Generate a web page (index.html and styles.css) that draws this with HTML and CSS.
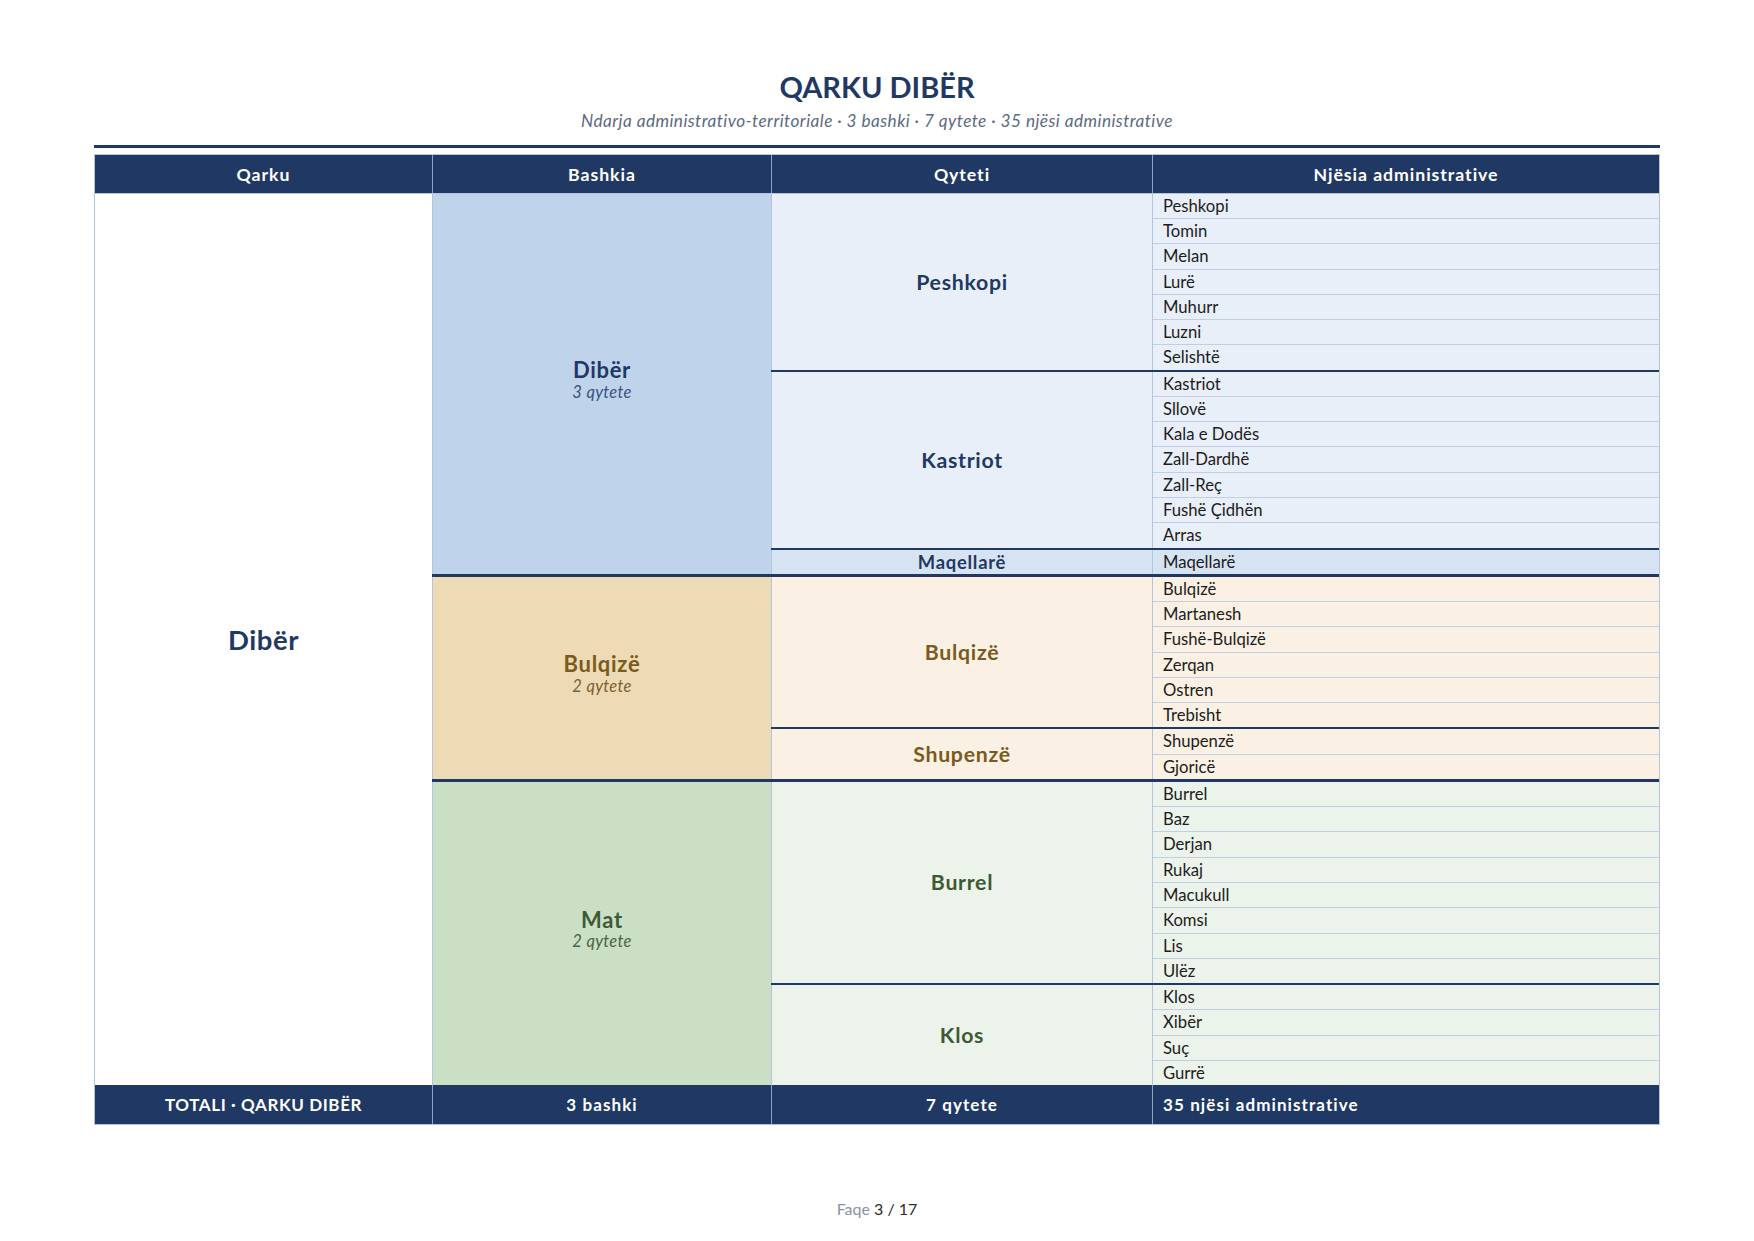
FILE: index.html
```html
<!DOCTYPE html>
<html lang="sq">
<head>
<meta charset="utf-8">
<title>Qarku Dibër</title>
<link rel="stylesheet" href="styles.css">
</head>
<body>
<div class="page">
  <header class="doc-head">
    <h1 class="title">QARKU DIBËR</h1>
    <p class="subtitle">Ndarja administrativo-territoriale · 3 bashki · 7 qytete · 35 njësi administrative</p>
  </header>
  <div class="rule"></div>

  <div class="table">
    <div class="thead">
      <div class="th c1">Qarku</div>
      <div class="th c2">Bashkia</div>
      <div class="th c3">Qyteti</div>
      <div class="th c4">Njësia administrative</div>
    </div>

    <div class="tbody">
      <div class="qarku">Dibër</div>
      <div class="bashkia-list">

        <div class="bashkia b-diber">
          <div class="bashkia-cell">
            <div class="b-name">Dibër</div>
            <div class="b-count">3 qytete</div>
          </div>
          <div class="city-list">
            <div class="city">
              <div class="city-cell">Peshkopi</div>
              <div class="units">
                <div class="unit">Peshkopi</div>
                <div class="unit">Tomin</div>
                <div class="unit">Melan</div>
                <div class="unit">Lurë</div>
                <div class="unit">Muhurr</div>
                <div class="unit">Luzni</div>
                <div class="unit">Selishtë</div>
              </div>
            </div>
            <div class="city">
              <div class="city-cell">Kastriot</div>
              <div class="units">
                <div class="unit">Kastriot</div>
                <div class="unit">Sllovë</div>
                <div class="unit">Kala e Dodës</div>
                <div class="unit">Zall-Dardhë</div>
                <div class="unit">Zall-Reç</div>
                <div class="unit">Fushë Çidhën</div>
                <div class="unit">Arras</div>
              </div>
            </div>
            <div class="city city-alt">
              <div class="city-cell single">Maqellarë</div>
              <div class="units">
                <div class="unit">Maqellarë</div>
              </div>
            </div>
          </div>
        </div>

        <div class="bashkia b-bulqize">
          <div class="bashkia-cell">
            <div class="b-name">Bulqizë</div>
            <div class="b-count">2 qytete</div>
          </div>
          <div class="city-list">
            <div class="city">
              <div class="city-cell">Bulqizë</div>
              <div class="units">
                <div class="unit">Bulqizë</div>
                <div class="unit">Martanesh</div>
                <div class="unit">Fushë-Bulqizë</div>
                <div class="unit">Zerqan</div>
                <div class="unit">Ostren</div>
                <div class="unit">Trebisht</div>
              </div>
            </div>
            <div class="city">
              <div class="city-cell">Shupenzë</div>
              <div class="units">
                <div class="unit">Shupenzë</div>
                <div class="unit">Gjoricë</div>
              </div>
            </div>
          </div>
        </div>

        <div class="bashkia b-mat">
          <div class="bashkia-cell">
            <div class="b-name">Mat</div>
            <div class="b-count">2 qytete</div>
          </div>
          <div class="city-list">
            <div class="city">
              <div class="city-cell">Burrel</div>
              <div class="units">
                <div class="unit">Burrel</div>
                <div class="unit">Baz</div>
                <div class="unit">Derjan</div>
                <div class="unit">Rukaj</div>
                <div class="unit">Macukull</div>
                <div class="unit">Komsi</div>
                <div class="unit">Lis</div>
                <div class="unit">Ulëz</div>
              </div>
            </div>
            <div class="city">
              <div class="city-cell">Klos</div>
              <div class="units">
                <div class="unit">Klos</div>
                <div class="unit">Xibër</div>
                <div class="unit">Suç</div>
                <div class="unit">Gurrë</div>
              </div>
            </div>
          </div>
        </div>

      </div>
    </div>

    <div class="tfoot">
      <div class="tf c1 caps">TOTALI · QARKU DIBËR</div>
      <div class="tf c2">3 bashki</div>
      <div class="tf c3">7 qytete</div>
      <div class="tf c4 left">35 njësi administrative</div>
    </div>
  </div>

  <footer class="pager"><span class="pager-label">Faqe</span> 3 / 17</footer>
</div>
</body>
</html>
```

FILE: styles.css
```css
* { box-sizing: border-box; }

body {
  margin: 0;
  background: #ffffff;
  font-family: Lato, "Noto Sans", "Liberation Sans", sans-serif;
  color: #1c1c1c;
}

.page {
  width: 1754px;
  height: 1241px;
  padding: 69px 94px 0;
}

.title {
  margin: 0;
  font-size: 29px;
  line-height: 35px;
  font-weight: 700;
  color: #1f3864;
  text-align: center;
}

.subtitle {
  margin: 6px 0 0;
  font-size: 17.2px;
  line-height: 21px;
  letter-spacing: 0.45px;
  font-style: italic;
  color: #5b6a82;
  text-align: center;
}

.rule {
  height: 3px;
  margin-top: 14.3px;
  background: #1f3864;
}

.table {
  margin-top: 6px;
  border: 1px solid #b4c4dd;
}

/* column widths */
.c1 { width: 337px; flex: none; }
.c2 { width: 339px; flex: none; }
.c3 { width: 381px; flex: none; }
.c4 { flex: 1; }

.thead,
.tfoot {
  display: flex;
  background: #1f3864;
  color: #ffffff;
  font-weight: 700;
}

.thead {
  height: 38.5px;
  border-bottom: 1px solid #b4c4dd;
}

.tfoot {
  height: 38.5px;
}

.th,
.tf {
  display: flex;
  align-items: center;
  justify-content: center;
}

.th {
  font-size: 17.7px;
  letter-spacing: 0.95px;
}

.tf {
  font-size: 17px;
  letter-spacing: 1.1px;
}

.tf.caps {
  letter-spacing: 0.6px;
}

.th + .th,
.tf + .tf {
  border-left: 1px solid #8ea3c6;
}

.tf.left {
  justify-content: flex-start;
  padding-left: 10px;
}

/* body */
.tbody {
  display: flex;
}

.qarku {
  width: 337px;
  flex: none;
  display: flex;
  align-items: center;
  justify-content: center;
  font-size: 27.5px;
  letter-spacing: 0.6px;
  font-weight: 700;
  color: #1f3864;
  background: #ffffff;
}

.bashkia-list {
  flex: 1;
  display: flex;
  flex-direction: column;
}

.bashkia {
  display: flex;
}

.bashkia + .bashkia {
  border-top: 3px solid #1f3864;
}

.bashkia-cell {
  width: 339px;
  flex: none;
  border-left: 1px solid #b6c5dc;
  background: var(--bg-b);
  color: var(--ink);
  display: flex;
  flex-direction: column;
  align-items: center;
  justify-content: center;
  padding-bottom: 10px;
}

.b-name {
  font-size: 22px;
  line-height: 25.6px;
  letter-spacing: 0.7px;
  font-weight: 700;
}

.b-count {
  font-size: 16.5px;
  line-height: 18px;
  letter-spacing: 0.3px;
  font-style: italic;
  color: var(--ink-soft);
}

.city-list {
  flex: 1;
  display: flex;
  flex-direction: column;
}

.city {
  display: flex;
  background: var(--bg-c);
}

.city + .city {
  border-top: 2px solid #1f3864;
}

.city-alt {
  background: var(--bg-alt);
}

.city-cell {
  width: 381px;
  flex: none;
  border-left: 1px solid #b6c5dc;
  display: flex;
  align-items: center;
  justify-content: center;
  font-size: 21.3px;
  letter-spacing: 0.7px;
  font-weight: 700;
  color: var(--ink);
}

.city-cell.single {
  font-size: 18.4px;
  letter-spacing: 0.75px;
}

.units {
  flex: 1;
  border-left: 1px solid #b6c5dc;
}

.unit {
  box-sizing: content-box;
  height: 24.27px;
  line-height: 24.27px;
  padding: 0 10px;
  font-size: 16.67px;
  color: #1c1c1c;
}

.unit + .unit {
  border-top: 1px solid #c2cee3;
}

/* bashkia colour themes */
.b-diber {
  --bg-b: #bfd3ea;
  --bg-c: #e8eff9;
  --bg-alt: #d6e3f3;
  --ink: #1f3864;
  --ink-soft: #3a5480;
}

.b-bulqize {
  --bg-b: #ecdbb4;
  --bg-c: #faf1e4;
  --bg-alt: #faf1e4;
  --ink: #7a5a1d;
  --ink-soft: #7d6031;
}

.b-mat {
  --bg-b: #cbdfc5;
  --bg-c: #ecf3eb;
  --bg-alt: #ecf3eb;
  --ink: #3d5a35;
  --ink-soft: #4b6444;
}

/* page footer */
.pager {
  margin-top: 74px;
  text-align: center;
  font-size: 16px;
  line-height: 19px;
  color: #2a2a2a;
}

.pager-label {
  color: #8893a8;
}
```
